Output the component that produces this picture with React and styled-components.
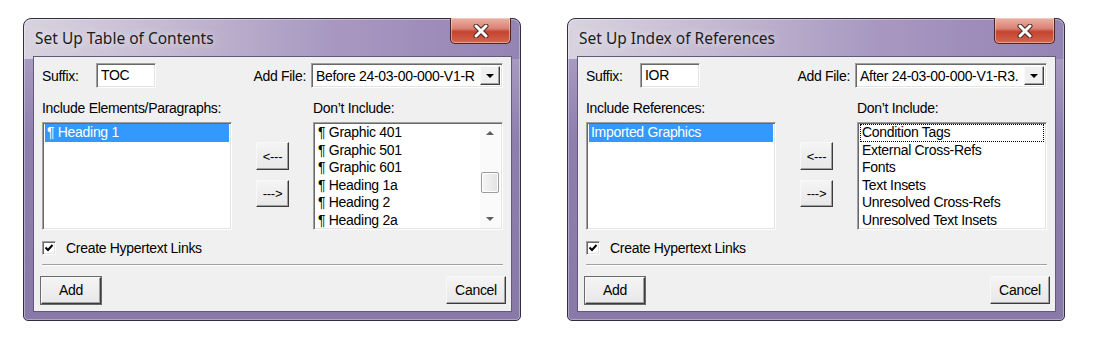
import styled, { createGlobalStyle } from "styled-components";

const UI_FONT = `"Liberation Sans", Arial, sans-serif`;

const GlobalStyle = createGlobalStyle`
  html, body {
    margin: 0;
    padding: 0;
    background: #ffffff;
  }

  body {
    font-family: ${UI_FONT};
    font-size: 14px;
    letter-spacing: -0.3px;
    color: #000;
  }

  * {
    box-sizing: border-box;
  }
`;

const Page = styled.div`
  display: flex;
  align-items: flex-start;
  gap: 46px;
  padding: 18px 0 0 23px;
  width: 1095px;
  height: 341px;
`;

const Window = styled.div`
  width: 498px;
  border: 1px solid #352d40;
  border-radius: 8px 8px 5px 5px;
  padding: 0 8px 8px 9px;
  background: linear-gradient(to right, #d8d3df 0%, #c3b9d1 30%, #a898c1 62%, #9583b4 100%) top / 100% 40px no-repeat,
    linear-gradient(to bottom, #b4a8c8 0%, #8f7dae 40%, #8a78a9 100%);
  box-shadow: inset 0 0 0 1px rgba(255, 255, 255, 0.35);
`;

const TitleBar = styled.div`
  height: 37px;
  display: flex;
  justify-content: space-between;
  align-items: flex-start;
`;

const Title = styled.span`
  font-family: "Noto Sans", "Open Sans", sans-serif;
  font-size: 15.5px;
  letter-spacing: 0;
  line-height: 38px;
  padding-left: 2px;
  color: #1c1c1c;
  text-shadow: 0 0 8px rgba(255, 255, 255, 0.8);
`;

const CloseButton = styled.div`
  width: 61px;
  height: 26px;
  margin: -1px 1px 0 0;
  border: 1px solid #4e2420;
  border-top: none;
  border-radius: 0 0 5px 5px;
  background: linear-gradient(to bottom, #eab2a6 0%, #d98272 42%, #c4432f 55%, #d4674f 100%);
  box-shadow: inset 0 0 0 1px rgba(255, 220, 210, 0.5);
  display: flex;
  align-items: center;
  justify-content: center;
`;

const Client = styled.div`
  background: #f0f0f0;
  border: 1px solid #65597a;
  padding: 6px 8px 7px 8px;
`;

const TopRow = styled.div`
  display: flex;
  justify-content: space-between;
  align-items: center;
  height: 25px;
`;

const Field = styled.div`
  display: flex;
  align-items: center;
`;

const FieldLabel = styled.span`
  width: ${(p) => p.$width || "auto"};
  margin-right: ${(p) => p.$gap || "0"};
  white-space: nowrap;
`;

const Sunken = styled.div`
  height: 25px;
  background: #fff;
  border: 1px solid;
  border-color: #a0a0a0 #ffffff #ffffff #a0a0a0;
  box-shadow: inset 1px 1px 0 #696969, inset -1px -1px 0 #e3e3e3;
`;

const TextInput = styled(Sunken)`
  width: 60px;
  padding: 1px 4px;
  line-height: 20px;
`;

const Combo = styled(Sunken)`
  width: 192px;
  display: flex;
  padding: 2px;
`;

const ComboText = styled.span`
  flex: 1;
  overflow: hidden;
  white-space: nowrap;
  padding-left: 2px;
  line-height: 20px;
`;

const ComboArrow = styled.div`
  width: 20px;
  background: #f0f0f0;
  border: 1px solid;
  border-color: #f8f8f8 #404040 #404040 #f8f8f8;
  box-shadow: inset -1px -1px 0 #a0a0a0;
  display: flex;
  align-items: center;
  justify-content: center;

  &::after {
    content: "";
    border-left: 4px solid transparent;
    border-right: 4px solid transparent;
    border-top: 4px solid #000;
  }
`;

const Columns = styled.div`
  display: grid;
  grid-template-columns: 190px 1fr 190px;
  grid-template-rows: 20px 108px;
  row-gap: 4px;
  margin-top: 10px;
`;

const ColumnLabel = styled.div`
  grid-column: ${(p) => p.$col};
  line-height: 20px;
  white-space: nowrap;
`;

const ListBox = styled.div`
  grid-column: ${(p) => p.$col};
  display: flex;
  background: #fff;
  border: 1px solid;
  border-color: #a0a0a0 #ffffff #ffffff #a0a0a0;
  box-shadow: inset 1px 1px 0 #696969, inset -1px -1px 0 #e3e3e3;
  padding: 1px 2px;
  overflow: hidden;
`;

const Items = styled.div`
  flex: 1;
  min-width: 0;
`;

const Item = styled.div`
  height: 17.6px;
  line-height: 17.6px;
  padding-left: 2px;
  white-space: nowrap;
  background: ${(p) => (p.$selected ? "#3399ff" : "transparent")};
  color: ${(p) => (p.$selected ? "#fff" : "#000")};
  outline: ${(p) => (p.$focused ? "1px dotted #000" : "none")};
  outline-offset: -1px;
`;

const Scrollbar = styled.div`
  width: 20px;
  display: flex;
  flex-direction: column;
  background: #fafafa;
`;

const ScrollArrow = styled.div`
  height: 18px;
  display: flex;
  align-items: center;
  justify-content: center;

  &::after {
    content: "";
    border-left: 4px solid transparent;
    border-right: 4px solid transparent;
    ${(p) => (p.$down ? "border-top: 4px solid #606060;" : "border-bottom: 4px solid #606060;")}
  }
`;

const Track = styled.div`
  flex: 1;
  padding: 0 1px;
`;

const Thumb = styled.div`
  height: 21px;
  border: 1px solid #9c9c9c;
  border-radius: 2px;
  background: linear-gradient(to right, #f6f6f6, #e2e2e2);
  box-shadow: inset 0 0 0 1px #fff;
`;

const MoveButtons = styled.div`
  display: flex;
  flex-direction: column;
  align-items: center;
  gap: 10px;
  padding-top: 20px;
`;

const Button = styled.div`
  width: ${(p) => p.$w}px;
  height: ${(p) => p.$h}px;
  display: flex;
  align-items: center;
  justify-content: center;
  background: linear-gradient(to bottom, #f4f4f4, #e8e8e8);
  border: 1px solid;
  border-color: #f8f8f8 #3c3c3c #3c3c3c #f8f8f8;
  box-shadow: ${(p) =>
    p.$default
      ? "0 0 0 1px #6a6a6a, inset -1px -1px 0 #a0a0a0"
      : "inset -1px -1px 0 #a0a0a0"};
  font-size: ${(p) => p.$size || 14}px;
  white-space: nowrap;
`;

const CheckRow = styled.div`
  display: flex;
  align-items: center;
  gap: 10px;
  height: 20px;
  margin-top: 8px;
`;

const CheckBox = styled.div`
  width: 14px;
  height: 14px;
  background: #fff;
  border: 1px solid;
  border-color: #a0a0a0 #ffffff #ffffff #a0a0a0;
  box-shadow: inset 1px 1px 0 #696969, inset -1px -1px 0 #e3e3e3;
  display: flex;
  align-items: center;
  justify-content: center;
`;

const Separator = styled.div`
  margin-top: 6px;
  border-top: 1px solid #a0a0a0;
  border-bottom: 1px solid #ffffff;
`;

const Footer = styled.div`
  display: flex;
  justify-content: space-between;
  align-items: center;
  margin: 10px -3px 0 -1px;
`;

function CloseGlyph() {
  return (
    <svg width="16" height="14" viewBox="0 0 16 14">
      <path d="M3 2 L13 12 M13 2 L3 12" stroke="#4a2a28" strokeWidth="5" strokeLinecap="round" />
      <path d="M3 2 L13 12 M13 2 L3 12" stroke="#ffffff" strokeWidth="3" strokeLinecap="round" />
    </svg>
  );
}

function CheckGlyph() {
  return (
    <svg width="10" height="10" viewBox="0 0 10 10">
      <path d="M1.5 4.5 L4 7 L8.5 2" fill="none" stroke="#000" strokeWidth="2" />
    </svg>
  );
}

function Dialog({ title, suffix, addFile, includeLabel, included, excluded, scroll, focusFirst }) {
  return (
    <Window>
      <TitleBar>
        <Title>{title}</Title>
        <CloseButton>
          <CloseGlyph />
        </CloseButton>
      </TitleBar>
      <Client>
        <TopRow>
          <Field>
            <FieldLabel $width="54px">Suffix:</FieldLabel>
            <TextInput>{suffix}</TextInput>
          </Field>
          <Field>
            <FieldLabel $gap="5px">Add File:</FieldLabel>
            <Combo>
              <ComboText>{addFile}</ComboText>
              <ComboArrow />
            </Combo>
          </Field>
        </TopRow>

        <Columns>
          <ColumnLabel $col={1}>{includeLabel}</ColumnLabel>
          <ColumnLabel $col={3}>Don’t Include:</ColumnLabel>

          <ListBox $col={1}>
            <Items>
              {included.map((item, i) => (
                <Item key={item} $selected={i === 0}>
                  {item}
                </Item>
              ))}
            </Items>
          </ListBox>

          <MoveButtons>
            <Button $w={33} $h={28} $size={13}>
              &lt;---
            </Button>
            <Button $w={33} $h={27} $size={13}>
              ---&gt;
            </Button>
          </MoveButtons>

          <ListBox $col={3}>
            <Items>
              {excluded.map((item, i) => (
                <Item key={item} $focused={focusFirst && i === 0}>
                  {item}
                </Item>
              ))}
            </Items>
            {scroll && (
              <Scrollbar>
                <ScrollArrow />
                <Track>
                  <Thumb style={{ marginTop: scroll }} />
                </Track>
                <ScrollArrow $down />
              </Scrollbar>
            )}
          </ListBox>
        </Columns>

        <CheckRow>
          <CheckBox>
            <CheckGlyph />
          </CheckBox>
          <span>Create Hypertext Links</span>
        </CheckRow>

        <Separator />

        <Footer>
          <Button $w={60} $h={27} $default>
            Add
          </Button>
          <Button $w={60} $h={28}>
            Cancel
          </Button>
        </Footer>
      </Client>
    </Window>
  );
}

export default function App() {
  return (
    <>
      <GlobalStyle />
      <Page>
        <Dialog
          title="Set Up Table of Contents"
          suffix="TOC"
          addFile="Before 24-03-00-000-V1-R"
          includeLabel="Include Elements/Paragraphs:"
          included={["¶ Heading 1"]}
          excluded={[
            "¶ Graphic 401",
            "¶ Graphic 501",
            "¶ Graphic 601",
            "¶ Heading 1a",
            "¶ Heading 2",
            "¶ Heading 2a",
          ]}
          scroll={30}
        />
        <Dialog
          title="Set Up Index of References"
          suffix="IOR"
          addFile="After 24-03-00-000-V1-R3."
          includeLabel="Include References:"
          included={["Imported Graphics"]}
          excluded={[
            "Condition Tags",
            "External Cross-Refs",
            "Fonts",
            "Text Insets",
            "Unresolved Cross-Refs",
            "Unresolved Text Insets",
          ]}
          focusFirst
        />
      </Page>
    </>
  );
}
